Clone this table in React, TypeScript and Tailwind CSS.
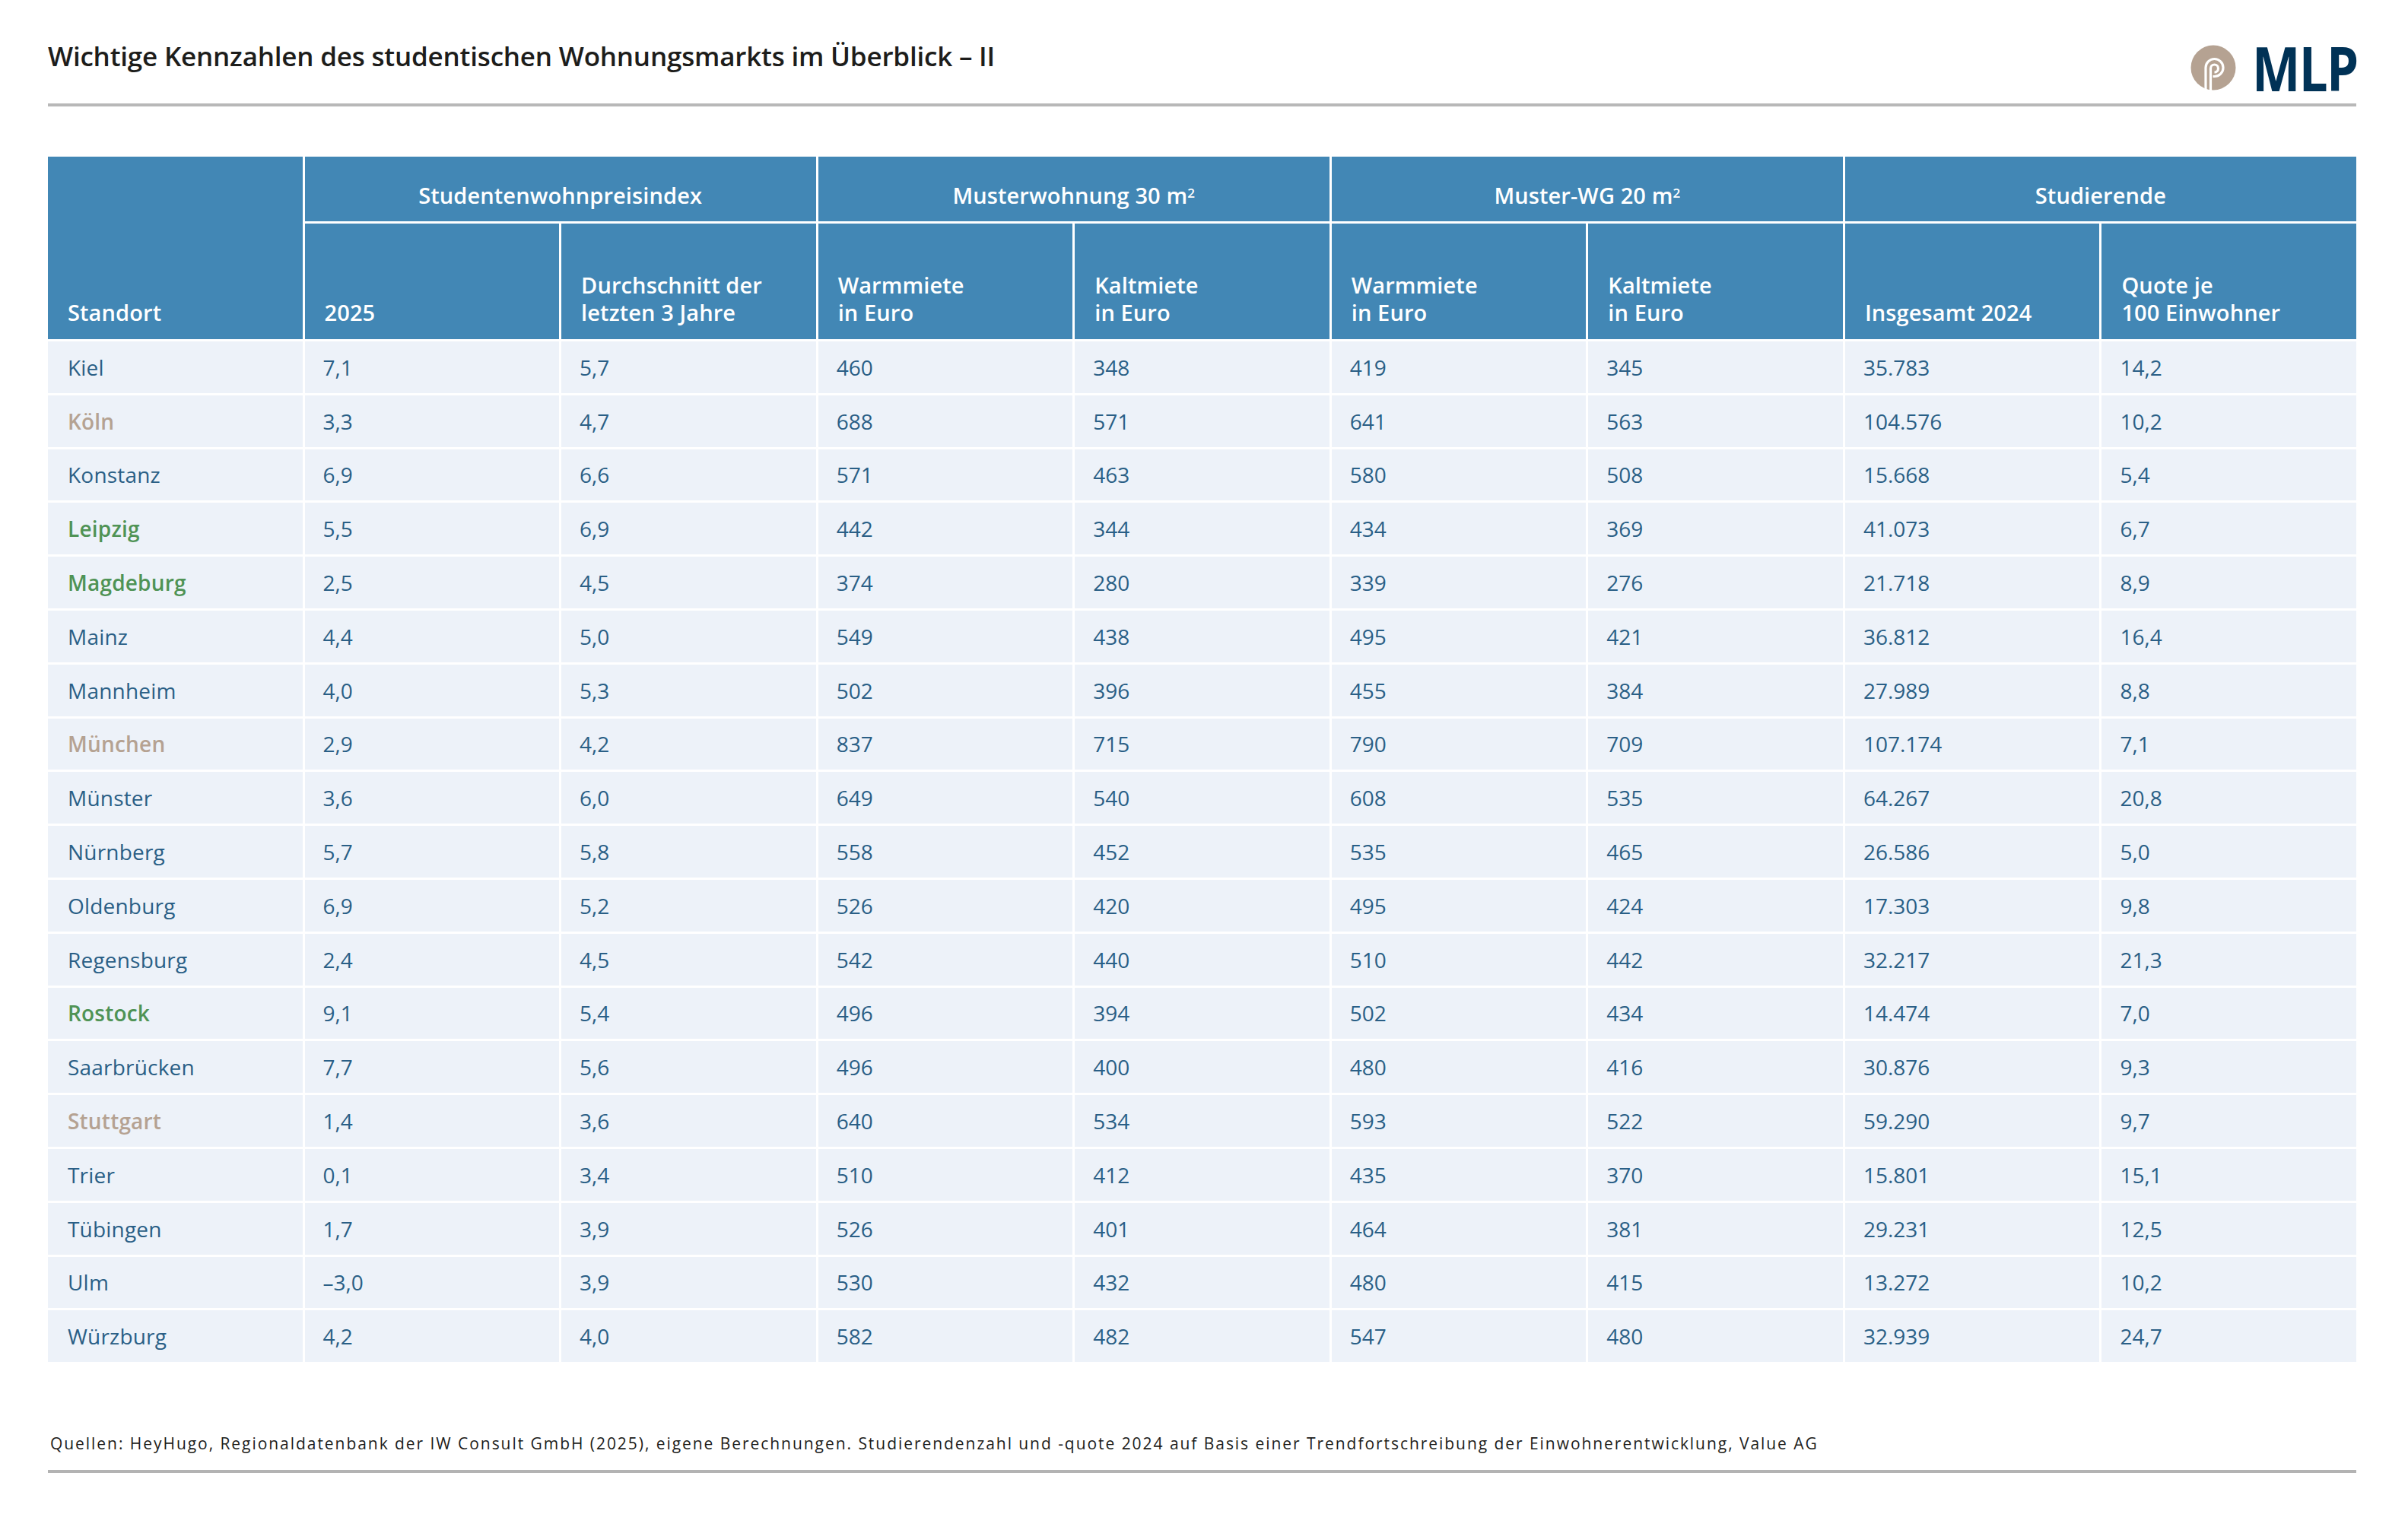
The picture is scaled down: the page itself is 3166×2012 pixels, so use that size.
import React from "react";

type Row = { name: string; tone?: "green" | "beige"; v: string[] };

const rows: Row[] = [
  { name: "Kiel", v: ["7,1", "5,7", "460", "348", "419", "345", "35.783", "14,2"] },
  { name: "Köln", tone: "beige", v: ["3,3", "4,7", "688", "571", "641", "563", "104.576", "10,2"] },
  { name: "Konstanz", v: ["6,9", "6,6", "571", "463", "580", "508", "15.668", "5,4"] },
  { name: "Leipzig", tone: "green", v: ["5,5", "6,9", "442", "344", "434", "369", "41.073", "6,7"] },
  { name: "Magdeburg", tone: "green", v: ["2,5", "4,5", "374", "280", "339", "276", "21.718", "8,9"] },
  { name: "Mainz", v: ["4,4", "5,0", "549", "438", "495", "421", "36.812", "16,4"] },
  { name: "Mannheim", v: ["4,0", "5,3", "502", "396", "455", "384", "27.989", "8,8"] },
  { name: "München", tone: "beige", v: ["2,9", "4,2", "837", "715", "790", "709", "107.174", "7,1"] },
  { name: "Münster", v: ["3,6", "6,0", "649", "540", "608", "535", "64.267", "20,8"] },
  { name: "Nürnberg", v: ["5,7", "5,8", "558", "452", "535", "465", "26.586", "5,0"] },
  { name: "Oldenburg", v: ["6,9", "5,2", "526", "420", "495", "424", "17.303", "9,8"] },
  { name: "Regensburg", v: ["2,4", "4,5", "542", "440", "510", "442", "32.217", "21,3"] },
  { name: "Rostock", tone: "green", v: ["9,1", "5,4", "496", "394", "502", "434", "14.474", "7,0"] },
  { name: "Saarbrücken", v: ["7,7", "5,6", "496", "400", "480", "416", "30.876", "9,3"] },
  { name: "Stuttgart", tone: "beige", v: ["1,4", "3,6", "640", "534", "593", "522", "59.290", "9,7"] },
  { name: "Trier", v: ["0,1", "3,4", "510", "412", "435", "370", "15.801", "15,1"] },
  { name: "Tübingen", v: ["1,7", "3,9", "526", "401", "464", "381", "29.231", "12,5"] },
  { name: "Ulm", v: ["–3,0", "3,9", "530", "432", "480", "415", "13.272", "10,2"] },
  { name: "Würzburg", v: ["4,2", "4,0", "582", "482", "547", "480", "32.939", "24,7"] },
];

function Logo() {
  return (
    <div className="flex items-center gap-[21px]">
      <svg width="60" height="60" viewBox="0 0 60 60">
        <circle cx="30" cy="30" r="29.5" fill="#b5a292" />
        <path
          d="M20 60 V30 A11.5 11.5 0 1 1 31.5 41.5 H29.5"
          fill="none"
          stroke="#ffffff"
          strokeWidth="3.2"
        />
        <path
          d="M26.5 60 V31 A5 5 0 0 1 31.5 26 A5 5 0 0 1 31.5 36"
          fill="none"
          stroke="#ffffff"
          strokeWidth="3.2"
        />
      </svg>
      <div
        className="text-[80px] font-bold leading-none text-[#003256] tracking-[-2px] origin-left scale-x-[0.84] -mr-[28px]"
        style={{ fontFamily: "'Open Sans', 'Liberation Sans', sans-serif" }}
      >
        MLP
      </div>
    </div>
  );
}

function HeadCell({ children, className = "" }: { children: React.ReactNode; className?: string }) {
  return (
    <div className={"bg-[#4287b5] text-white font-semibold text-[29px] leading-[36px] tracking-[0.1px] " + className}>
      {children}
    </div>
  );
}

export default function App() {
  return (
    <div
      className="w-[3166px] h-[2012px] bg-white pl-[63px]"
      style={{ fontFamily: "'Open Sans', 'Noto Sans', sans-serif" }}
    >
      <div className="w-[3035px]">
        <div className="h-[136px] flex justify-between items-start">
          <div className="mt-[53px] text-[35px] leading-[42px] font-semibold text-[#1d1d1b] tracking-[-0.2px]">
            Wichtige Kennzahlen des studentischen Wohnungsmarkts im Überblick – II
          </div>
          <div className="mt-[49px]">
            <Logo />
          </div>
        </div>
        <div className="h-[4px] bg-[#b8b8b8]" />

        <div className="mt-[66px] grid grid-cols-9 grid-rows-[85px_152px] gap-[3px]">
          <HeadCell className="row-span-2 flex items-end pl-[26px] pb-[17px]">Standort</HeadCell>
          <HeadCell className="col-span-2 flex items-end justify-center pb-[16px]">Studentenwohnpreisindex</HeadCell>
          <HeadCell className="col-span-2 flex items-end justify-center pb-[16px]">
            <span>
              Musterwohnung 30 m<sup className="text-[17px]">2</sup>
            </span>
          </HeadCell>
          <HeadCell className="col-span-2 flex items-end justify-center pb-[16px]">
            <span>
              Muster-WG 20 m<sup className="text-[17px]">2</sup>
            </span>
          </HeadCell>
          <HeadCell className="col-span-2 flex items-end justify-center pb-[16px]">Studierende</HeadCell>
          <HeadCell className="flex items-end pl-[26px] pb-[17px]">2025</HeadCell>
          <HeadCell className="flex items-end pl-[26px] pb-[17px]">
            <span>
              Durchschnitt der
              <br />
              letzten 3 Jahre
            </span>
          </HeadCell>
          <HeadCell className="flex items-end pl-[26px] pb-[17px]">
            <span>
              Warmmiete
              <br />
              in Euro
            </span>
          </HeadCell>
          <HeadCell className="flex items-end pl-[26px] pb-[17px]">
            <span>
              Kaltmiete
              <br />
              in Euro
            </span>
          </HeadCell>
          <HeadCell className="flex items-end pl-[26px] pb-[17px]">
            <span>
              Warmmiete
              <br />
              in Euro
            </span>
          </HeadCell>
          <HeadCell className="flex items-end pl-[26px] pb-[17px]">
            <span>
              Kaltmiete
              <br />
              in Euro
            </span>
          </HeadCell>
          <HeadCell className="flex items-end pl-[26px] pb-[17px]">Insgesamt 2024</HeadCell>
          <HeadCell className="flex items-end pl-[26px] pb-[17px]">
            <span>
              Quote je
              <br />
              100 Einwohner
            </span>
          </HeadCell>
        </div>

        <div className="mt-[3px] flex flex-col gap-[3px]">
          {rows.map((r) => (
            <div key={r.name} className="grid grid-cols-9 gap-[3px] h-[67.8px]">
              <div
                className={
                  "bg-[#edf2f9] flex items-center pl-[26px] text-[28px] tracking-[0.2px] " +
                  (r.tone === "green"
                    ? "text-[#4f9355] font-semibold"
                    : r.tone === "beige"
                    ? "text-[#b5a292] font-semibold"
                    : "text-[#2a5f86]")
                }
              >
                {r.name}
              </div>
              {r.v.map((x, i) => (
                <div key={i} className="bg-[#edf2f9] flex items-center pl-[24px] text-[28px] text-[#2a5f86]">
                  {x}
                </div>
              ))}
            </div>
          ))}
        </div>

        <div className="mt-[93px] pl-[3px] text-[21px] leading-[28px] tracking-[1.95px] text-[#1d1d1b] whitespace-nowrap">
          Quellen: HeyHugo, Regionaldatenbank der IW Consult GmbH (2025), eigene Berechnungen. Studierendenzahl und -quote 2024 auf Basis einer Trendfortschreibung der Einwohnerentwicklung, Value AG
        </div>
        <div className="mt-[21px] h-[4px] bg-[#b3b3b3]" />
      </div>
    </div>
  );
}
